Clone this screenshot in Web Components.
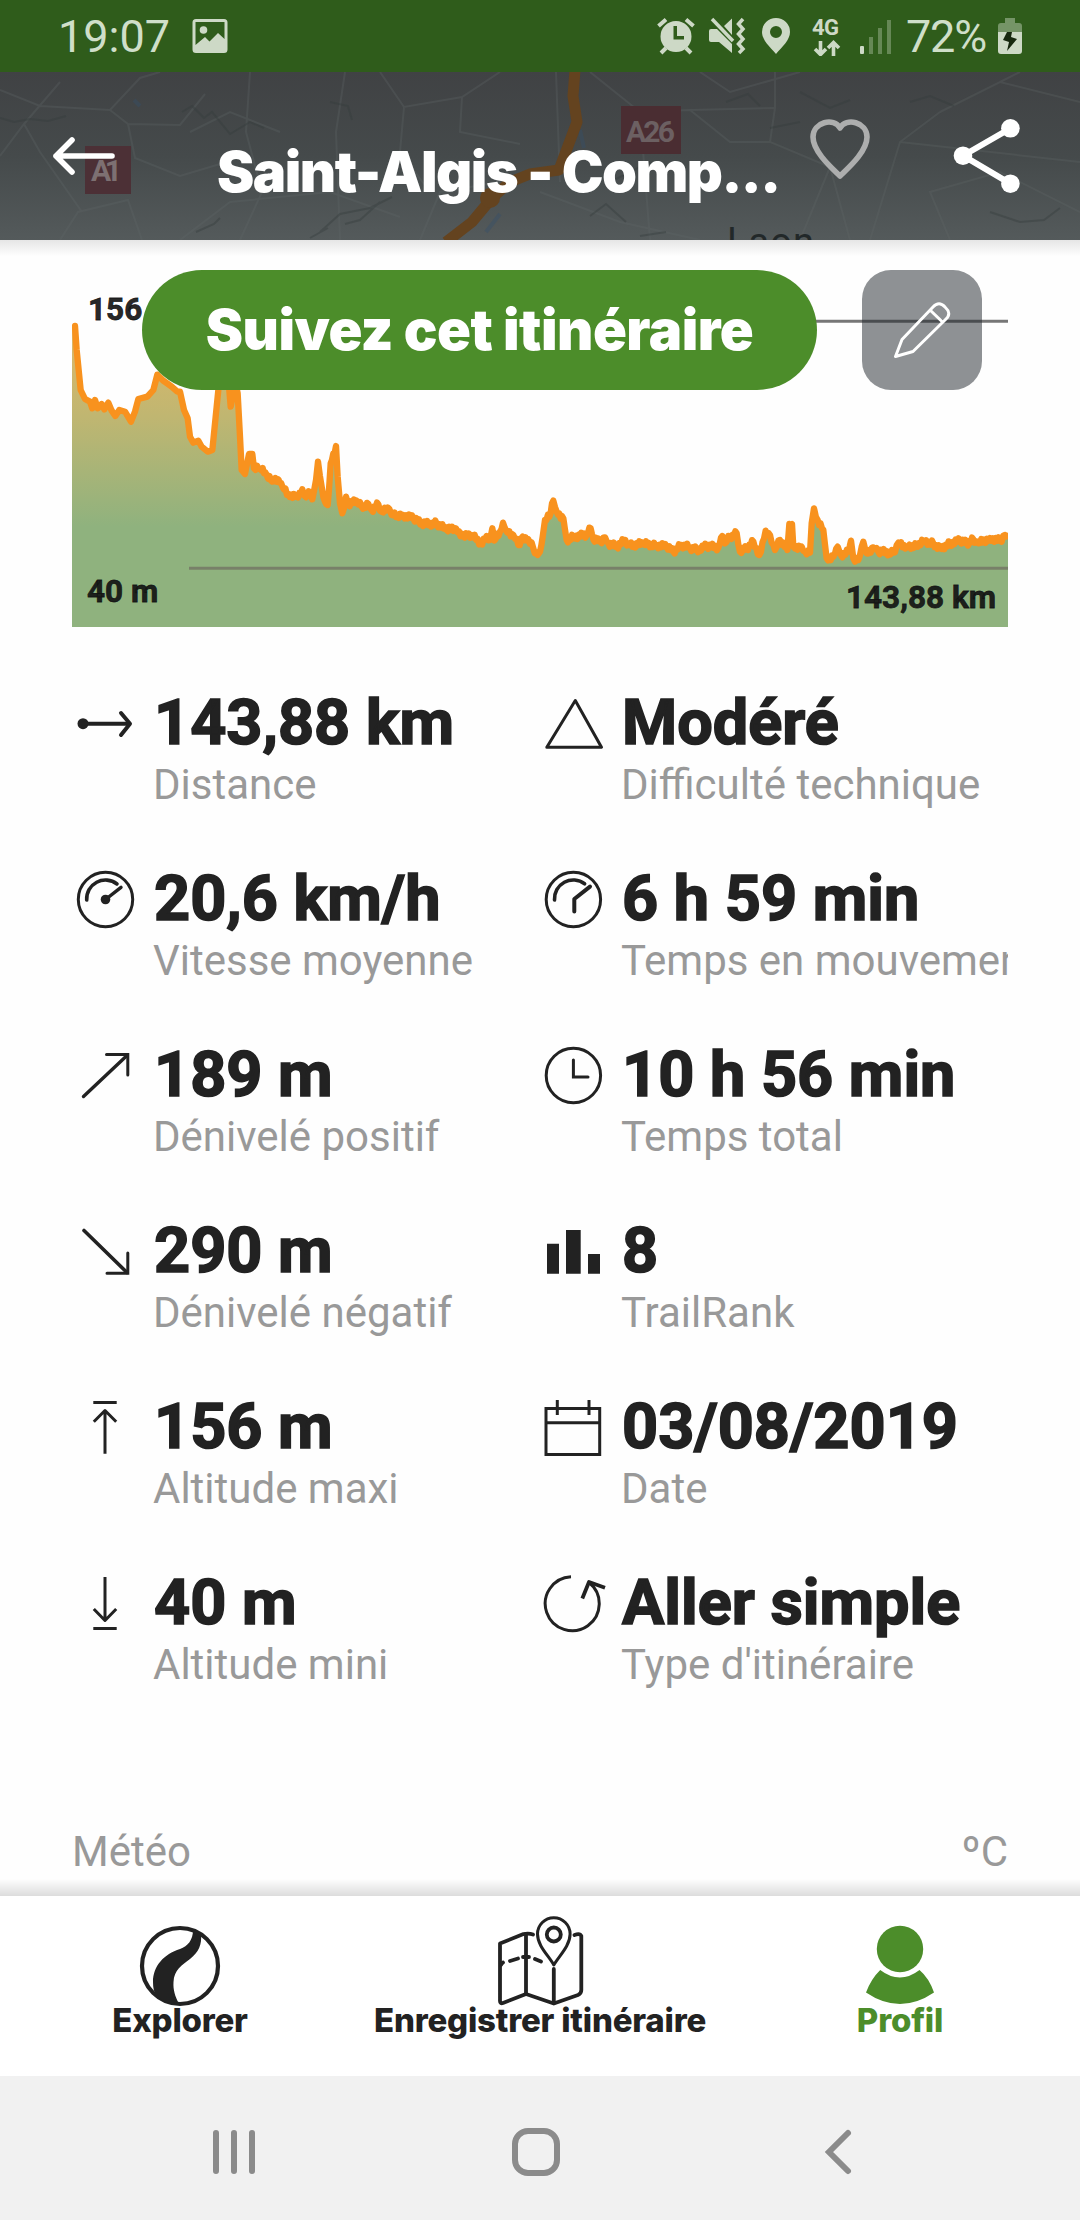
<!DOCTYPE html>
<html lang="fr">
<head>
<meta charset="utf-8">
<title>Saint-Algis</title>
<style>
    body {
        margin: 0;
        background: #fefefe;
        font-family: Roboto, "Liberation Sans", sans-serif;
        color: #222;
    }
</style>
</head>
<body>
<trail-screen>
    <status-bar slot="status" time="19:07" battery="72%"></status-bar>
    <trail-header slot="header">Saint-Algis - Comp...</trail-header>

    <elevation-chart max="156 m" min="40 m" distance="143,88 km">
        <follow-button>Suivez cet itinéraire</follow-button>
        <edit-button></edit-button>
    </elevation-chart>

    <stats-grid>
        <trail-stat icon="distance" label="Distance">143,88 km</trail-stat>
        <trail-stat icon="triangle" label="Difficulté technique">Modéré</trail-stat>
        <trail-stat icon="speed" label="Vitesse moyenne">20,6 km/h</trail-stat>
        <trail-stat icon="moving" label="Temps en mouvement">6 h 59 min</trail-stat>
        <trail-stat icon="up" label="Dénivelé positif">189 m</trail-stat>
        <trail-stat icon="clock" label="Temps total">10 h 56 min</trail-stat>
        <trail-stat icon="down" label="Dénivelé négatif">290 m</trail-stat>
        <trail-stat icon="rank" label="TrailRank">8</trail-stat>
        <trail-stat icon="max" label="Altitude maxi">156 m</trail-stat>
        <trail-stat icon="calendar" label="Date">03/08/2019</trail-stat>
        <trail-stat icon="min" label="Altitude mini">40 m</trail-stat>
        <trail-stat icon="loop" label="Type d'itinéraire">Aller simple</trail-stat>
    </stats-grid>

    <weather-row unit="ºC">Météo</weather-row>

    <tab-bar slot="tabs">
        <tab-item icon="explore">Explorer</tab-item>
        <tab-item icon="map">Enregistrer itinéraire</tab-item>
        <tab-item icon="profile" active>Profil</tab-item>
    </tab-bar>
    <system-nav slot="nav"></system-nav>
</trail-screen>

<script>
const statIcons = {
    distance: `<circle cx="11" cy="29.7" r="5.5" fill="#222" stroke="none"/><path d="M11 29.7H57" style="stroke-width:4"/><path d="M49 19L58 29.7L49 41" style="stroke-width:4"/>`,
    triangle: `<path d="M35.3 6.5L61.5 53.3H6.8Z"/>`,
    speed: `<circle cx="33.5" cy="29.5" r="27.2"/><path d="M14.7 30A18.8 18.8 0 0 1 45 14" style="stroke-width:3.6"/><circle cx="33.5" cy="29.5" r="4.8" fill="#222" stroke="none"/><path d="M33.5 29.5L49 17.3" style="stroke-width:3.4"/>`,
    moving: `<circle cx="33.4" cy="29.5" r="27.2"/><path d="M14.5 30A18.8 18.8 0 0 1 44.6 13.8" style="stroke-width:3.6"/><path d="M34.3 41.5V29L50 16.6" style="stroke-width:4"/>`,
    up: `<path d="M11.5 50.5L55 9.5" style="stroke-width:3.4"/><path d="M34.5 8.6H55.8V29" stroke-linejoin="miter"/>`,
    clock: `<circle cx="33.4" cy="29.5" r="27.2"/><path d="M33.4 14V31H48" stroke-linejoin="miter"/>`,
    down: `<path d="M12 8.5L55 50.5" style="stroke-width:3.6"/><path d="M35 51.3H55.8V31" stroke-linejoin="miter"/>`,
    rank: `<path d="M7 21.7H19V51.8H7ZM26 8H40.7V51.8H26ZM48 32H60V51.8H48Z" fill="#222" stroke="none"/>`,
    max: `<path d="M21.3 4.5H44.7M33 13V55.7M21.8 23.8L33 12.5L44.2 23.8" style="stroke-linecap:butt"/>`,
    calendar: `<path d="M6 10.4H59.7V56.500H6ZM6 24.7H59.7M17.3 2V17M49 2V17" style="stroke-linecap:butt;stroke-linejoin:miter"/>`,
    min: `<path d="M21.3 54.5H44.7M33 3V46.5M21.8 35L33 46.5L44.2 35" style="stroke-linecap:butt"/>`,
    loop: `<path d="M31 2.7A27 27 0 1 0 49 8.5" style="stroke-linecap:butt"/><path d="M42.3 24.5L49 8L65 13.7" style="stroke-width:3.8;stroke-linecap:butt"/>`
};

const tabIcons = {
    explore: `<circle cx="45" cy="50" r="38" fill="none" stroke="currentColor" stroke-width="4.2"/>
        <path fill="currentColor" d="M58 14C58 24 53 30 45 33C29 38 18 50 18 66C18 72 19 76 21 79C27 86 36 88 44 88C40 80 38 74 38.5 66C39 54 47 49 55 43C64 36 67 28 66 18Z"/>`,
    map: `<g fill="none" stroke="currentColor" stroke-width="3.8" stroke-linejoin="round" stroke-linecap="round">
        <path d="M38 18.5Q34 17 28.5 18L5 27.5V85Q5 88 8 87L31 78L58.8 87.5L83 79Q86.3 77.5 86.3 74V20Q85 17 79.5 19"/>
        <path d="M31 18V78M58.8 53V87"/>
        <path d="M6 49Q7 47 8 46.5M15 45L23 42.5M28 41H34M40 43L46 45.5"/>
        <path d="M58.8 49C54 40 42.5 30 42.5 18A16.3 16.3 0 0 1 75.1 18C75.1 30 64 40 58.8 49Z" stroke-width="3"/>
        <circle cx="58.8" cy="18.5" r="7"/></g>`,
    profile: `<circle cx="45" cy="33" r="23.2" fill="currentColor"/>
        <path fill="currentColor" d="M25.2 54Q45 69 64.5 54Q74 62 79 76.5Q62 88 45 88Q28 88 11 76.5Q16 63 25.2 54Z"/>`
};

function define(name, html, setup){
    const template = document.createElement('template');
    template.innerHTML = html;
    customElements.define(name, class extends HTMLElement{
        constructor(){
            super();
            this.attachShadow({mode: 'open'});
            this.shadowRoot.appendChild( template.content.cloneNode(true) );
        }
        connectedCallback(){
            if (setup) setup(this, this.shadowRoot);
        }
    });
}

define('trail-screen', `
    <style>
        :host {
            display: flex;
            flex-direction: column;
            width: 1080px;
            height: 2220px;
            overflow: hidden;
        }
        main {
            flex: 1;
            min-height: 0;
            overflow: hidden;
            padding: 30px 72px 0;
            box-sizing: border-box;
            background:
                linear-gradient(#e6e6e6, rgba(254, 254, 254, 0)) top / 100% 16px no-repeat,
                linear-gradient(rgba(254, 254, 254, 0), #dcdcdc) bottom / 100% 17px no-repeat,
                #fefefe;
        }
    </style>
    <slot name="status"></slot>
    <slot name="header"></slot>
    <main><slot></slot></main>
    <slot name="tabs"></slot>
    <slot name="nav"></slot>
`);

define('status-bar', `
    <style>
        :host {
            display: flex;
            align-items: center;
            height: 72px;
            flex: none;
            padding: 0 58px 0 58px;
            box-sizing: border-box;
            background: #2f5c1b;
            color: #cfdfc9;
            font-size: 45px;
        }
        svg { display: block; fill: #cdd9c6; }
        .photo { margin-left: 22px; }
        .icons { margin-left: auto; display: flex; align-items: center; }
        .level { width: 107px; padding-left: 15px; box-sizing: border-box; letter-spacing: -1.2px; }
        span { line-height: 72px; padding-top: 2px; }
    </style>
    <span class="time"></span>
    <svg class="photo" width="36" height="36" viewBox="0 0 36 36"><path fill-rule="evenodd" d="M4 1H32Q35.5 1 35.5 4.5V31.5Q35.5 35 32 35H4Q.5 35 .5 31.5V4.5Q.5 1 4 1ZM3.5 4V27L13 19L17.5 23.5L26 15L32.5 21V4Z"/><circle cx="11.5" cy="12" r="3.8"/></svg>
    <div class="icons">
        <svg width="38" height="38" viewBox="0 0 38 38"><path fill-rule="evenodd" d="M19 4A15.5 15.5 0 1 0 19 35A15.5 15.5 0 1 0 19 4ZM16.5 9H20V19H27V22.5H16.5Z"/><path d="M1.5 9L9 2.5M36.5 9L29 2.5M4 36L9 31M34 36L29 31" stroke="#cdd9c6" stroke-width="4"/></svg>
        <svg style="margin-left:14px" width="38" height="38" viewBox="0 0 38 38"><path d="M0 14Q0 12 2 12H8L23 27V36L10 25H2Q0 25 0 23ZM15 9L23 1.5V18Z"/><path d="M3 2L24 24" stroke="#cdd9c6" stroke-width="3.5"/><path d="M34 2L29.5 7L34 12L29.5 17L34 22L29.5 27L34 32L30 36" fill="none" stroke="#cdd9c6" stroke-width="3.5"/></svg>
        <svg style="margin-left:15px" width="28" height="38" viewBox="0 0 28 38"><path fill-rule="evenodd" d="M14 1A14 14 0 0 0 0 15C0 23 8 30 14 37C20 30 28 23 28 15A14 14 0 0 0 14 1ZM14 9A6 6 0 1 1 14 21A6 6 0 1 1 14 9Z"/></svg>
        <svg style="margin-left:22px" width="30" height="40" viewBox="0 0 30 40"><text x="0" y="19" font-family="Roboto" font-weight="700" font-size="22" textLength="27">4G</text><path d="M8.5 25V38M3 33L8.5 38.5L14 33M21.5 40V27M16 32L21.5 26.5L27 32" fill="none" stroke="#cdd9c6" stroke-width="3.6"/></svg>
        <svg style="margin-left:18px" width="31" height="38" viewBox="0 0 31 38"><rect y="29" width="4" height="8" rx="1"/><path d="M9 20H13V37H9ZM18 11H22V37H18ZM27 3H31V37H27Z" opacity=".35"/></svg>
        <span class="level"></span>
        <svg width="24" height="38" viewBox="0 0 24 38"><path d="M7 1H17V6H21Q24 6 24 9V15H0V9Q0 6 3 6H7Z" opacity=".45"/><path d="M0 15H24V34Q24 37 21 37H3Q0 37 0 34Z"/><path d="M9 15H14L13 20L19 22L9 34L11 25L5 23Z" fill="#17280f"/></svg>
    </div>
`, (host, root) => {
    root.querySelector('.time').textContent = host.getAttribute('time');
    root.querySelector('.level').textContent = host.getAttribute('battery');
});

define('trail-header', `
    <style>
        :host {
            position: relative;
            display: flex;
            align-items: center;
            height: 168px;
            flex: none;
            overflow: hidden;
            color: #fff;
            background: linear-gradient(#404244, #454a4b 50%, #545a5b);
        }
        .map { position: absolute; inset: 0; }
        .back { position: relative; margin-left: 50px; }
        h1 {
            position: relative;
            margin: 32px 0 0 100px;
            width: 575px;
            white-space: nowrap;
            font: 900 56px/68px Inter, sans-serif;
            letter-spacing: -1.5px;
        }
        .heart { position: relative; margin: -14px 0 0 15px; }
        .share { position: relative; margin: 0 0 0 80px; }
    </style>
    <svg class="map" width="1080" height="168" viewBox="0 0 1080 168">
        <g fill="none" stroke="#606768" stroke-width="2" opacity=".3">
            <path d="M0 18L40 34L110 38L140 6L160 0M110 38L128 52L180 53L205 22M128 52L135 86L180 104L220 92M0 84L24 52L60 10M60 168L78 140L128 128L142 168M24 52L40 80L82 140M250 0L246 60L262 120L240 168M345 0L336 60L340 168M380 0L404 35L462 25L500 0M404 35L400 80L430 120M462 25L460 60L520 72"/>
            <path d="M556 0L560 110M590 0L640 40L690 38L775 36L770 70L830 95L850 168M775 36V0M640 40L650 168M690 38L730 70L770 70M540 120L620 150L700 168M830 95L800 168M940 40L900 70L870 168M940 40L1000 10L1080 30M1000 10L1020 0M900 70L1080 90M950 168L930 120L1000 100L1080 140M700 0L730 20L800 0"/>
            <path d="M180 168L230 130L330 120L400 145M280 60L230 40L190 60M420 168L440 120L500 110"/>
        </g>
        <g fill="none" stroke="#343b3c" stroke-width="2" opacity=".4">
            <path d="M0 46L14 50L30 47L48 49L66 44M182 40L192 34L204 46L212 40L230 62L250 50L264 56M330 30L348 34L352 48M196 160L214 152L220 146M320 160L340 142L370 136L392 125M345 152L360 148L380 130M310 166L328 156"/>
            <path d="M726 30L748 22L760 34M770 56L800 50M800 20L830 36L850 28M990 140L1020 150L1044 148L1060 136M590 144L606 132L626 150M610 110L650 90M910 30L930 24L954 34M640 164L666 160"/>
        </g>
        <path d="M134 28L140 34M580 58L584 76M486 160L500 142" stroke="#35506b" stroke-width="4" opacity=".4"/>
        <path d="M575 -2L573 24L577 50L559 98L530 102L510 110L492 126L472 150L446 170" fill="none" stroke="#64431f" stroke-width="11" stroke-linejoin="round"/>
        <circle cx="490" cy="126" r="10" fill="#64431f"/>
        <g font-family="Roboto" font-weight="700" font-size="30">
            <rect x="85" y="74" width="46" height="48" fill="#4c3036"/><text x="91" y="109" fill="#7d7072" textLength="31">A1</text>
            <rect x="621" y="34" width="60" height="48" fill="#4a2d32"/><text x="626" y="70" fill="#6c6062" textLength="49">A26</text>
        </g>
        <text x="727" y="183" font-family="Roboto" font-size="38" fill="#222829" textLength="87">Laon</text>
    </svg>
    <svg class="back" width="67" height="40" viewBox="0 0 67 40"><path d="M62 20H6M22 4L6 20L22 36" fill="none" stroke="#fff" stroke-width="5.6" stroke-linecap="round" stroke-linejoin="round"/></svg>
    <h1><slot></slot></h1>
    <svg class="heart" width="66" height="66" viewBox="0 0 66 66"><path d="M33 60C26 53 6 36 6 21C6 6 27 1 33 12C39 1 60 6 60 21C60 36 40 53 33 60Z" fill="none" stroke="#adaeae" stroke-width="5.6" stroke-linejoin="round"/></svg>
    <svg class="share" width="70" height="80" viewBox="0 0 70 80"><path d="M57.4 12.3L10 39.7L57.4 67.7" fill="none" stroke="#fff" stroke-width="6"/><circle cx="57.4" cy="12.3" r="9.3" fill="#fff"/><circle cx="10" cy="39.7" r="9.3" fill="#fff"/><circle cx="57.4" cy="67.7" r="9.3" fill="#fff"/></svg>
`);

define('elevation-chart', `
    <style>
        :host {
            display: block;
            position: relative;
            height: 357px;
            font-size: 31.5px;
            font-weight: 700;
            line-height: 38px;
            -webkit-text-stroke: .8px;
        }
        svg { display: block; }
        span { position: absolute; color: rgba(18, 18, 18, .92); }
        .max { left: 16px; top: 21px; }
        .min { left: 15px; top: 303px; }
        .distance { right: 12px; top: 309px; }
        .actions {
            position: absolute;
            top: 0;
            left: 70px;
            display: flex;
            gap: 45px;
        }
    </style>
    <svg width="936" height="357" viewBox="36 60 2808 1071">
        <defs>
            <linearGradient id="slope" gradientUnits="userSpaceOnUse" x1="0" y1="228" x2="0" y2="830">
                <stop offset="0" stop-color="#e0b868"/>
                <stop offset=".45" stop-color="#c0b671"/>
                <stop offset="1" stop-color="#8fb27e"/>
            </linearGradient>
        </defs>
        <path class="area" fill="url(#slope)"/>
        <path class="line" fill="none" stroke="#f8921e" stroke-width="19" stroke-linejoin="round" stroke-linecap="round"/>
        <path d="M387 214H2844" stroke="#777" stroke-width="9"/>
        <path d="M387 955H2844" stroke="#788069" stroke-width="9"/>
    </svg>
    <span class="max"></span>
    <span class="min"></span>
    <span class="distance"></span>
    <div class="actions"><slot></slot></div>
`, (host, root) => {
    for (const key of ['max', 'min', 'distance']){
        root.querySelector('.' + key).textContent = host.getAttribute(key);
    }

    // Each half of the ride, x counted from the start of that half
    const firstHalf = '45,228 50,300 56,360 62,420 75,447 90,455 97,475 105,450 113,475 125,462 133,478 145,458 155,482 166,498 178,480 195,485 213,515 225,485 235,447 262,440 280,420 292,374 310,392 335,410 352,425 360,425 372,480 383,505 390,560 400,578 415,572 425,590 443,605 457,600 463,540 475,420 478,385 505,385 512,470 527,400 533,430 540,560 545,660 555,672 567,612 577,612 582,655 600,655 620,675 637,695 655,688 668,712 685,732 710,740 727,718 738,742 750,728 757,748 768,690 774,635 785,710 795,755 803,765 812,640 828,588 833,680 840,760 847,790 858,740 865,765 890,752 905,770 925,762 935,780 955,763 965,785 988,777 995,795 1030,795 1060,805 1085,822 1130,820 1160,840 1188,835 1210,860 1235,855 1262,880 1280,858 1290,870 1297,835 1303,872 1320,845 1329,818 1340,845 1360,855 1375,885 1388,860 1405,868 1420,895 1433,915';
    const secondHalf = '0,905 8,860 15,810 28,800 40,752 50,785 70,805 80,870 100,860 140,855 152,835 160,868 180,875 195,862 205,880 230,890 256,870 265,885 310,882 350,885 380,890 400,905 425,885 450,893 470,900 500,888 535,893 547,858 555,880 570,860 590,850 600,905 620,895 640,875 658,915 677,842 690,855 705,900 720,870 742,900 748,822 756,822 760,890 785,890 795,905 810,908 815,820 822,775 833,810 850,840 860,925 880,920 893,890 903,915 925,905 933,872 940,925 955,930 970,875 980,910 1000,892 1015,905 1060,908 1075,878 1100,890 1130,885 1150,872 1180,880 1200,895 1230,880 1260,872 1280,880 1300,868 1315,880 1350,864 1380,872 1395,855 1404,857';
    const parse = (text, start) => text.split(' ').map(pair => {
        const [x, y] = pair.split(',').map(Number);
        return [x + start, y];
    });
    const points = parse(firstHalf, 0).concat(parse(secondHalf, 1440));

    // small bumps between the samples
    const rough = [];
    points.forEach(([x, y], i) => {
        rough.push([x, y]);
        const next = points[i + 1];
        if (!next || x < 580) return;
        const steps = Math.floor((next[0] - x) / 4);
        for (let s = 1; s < steps; s++){
            const t = s / steps;
            const bump = 5 + 4 * Math.sin(x + s * 2.3);
            rough.push([x + (next[0] - x) * t, y + (next[1] - y) * t + (s % 2 ? bump : -bump)]);
        }
    });
    const line = 'M' + rough.map(p => p.join(' ')).join('L');
    root.querySelector('.line').setAttribute('d', line);
    root.querySelector('.area').setAttribute('d', line + 'V1131H36V228Z');
});

define('follow-button', `
    <style>
        :host {
            display: flex;
            align-items: center;
            justify-content: center;
            width: 675px;
            height: 120px;
            border-radius: 60px;
            background: #4c8d2a;
            color: #fff;
            font: 900 56px/1 Inter, sans-serif;
            letter-spacing: -.5px;
            white-space: nowrap;
            -webkit-text-stroke: 0;
        }
    </style>
    <slot></slot>
`);

define('edit-button', `
    <style>
        :host {
            display: block;
            width: 120px;
            height: 120px;
            border-radius: 29px;
            background: rgba(30, 36, 41, .5);
        }
        svg { display: block; }
    </style>
    <svg width="120" height="120" viewBox="0 0 120 120" fill="none" stroke="#fff" stroke-width="3" stroke-linejoin="round">
        <path d="M33.5 86.5L40 69.5L71 37Q77 30.5 83 37Q90 43.5 84 49L51 81.5Z"/>
        <path d="M68 40L80.5 52"/>
    </svg>
`);

define('stats-grid', `
    <style>
        :host {
            display: grid;
            grid-template-columns: 468px 468px;
            grid-auto-rows: 126px;
            row-gap: 50px;
            margin-top: 57px;
        }
    </style>
    <slot></slot>
`);

define('trail-stat', `
    <style>
        :host {
            display: flex;
            overflow: hidden;
        }
        svg {
            flex: none;
            margin: 10px 15px 0 0;
            fill: none;
            stroke: #222;
            stroke-width: 3px;
            stroke-linecap: round;
            stroke-linejoin: round;
        }
        div { white-space: nowrap; }
        .value {
            font-size: 63px;
            font-weight: 700;
            line-height: 78px;
            -webkit-text-stroke: 1.6px;
            padding-left: 1px;
        }
        .label {
            font-size: 42px;
            line-height: 46px;
            color: #999;
        }
    </style>
    <svg width="66" height="60" viewBox="0 0 66 60"></svg>
    <div>
        <div class="value"><slot></slot></div>
        <div class="label"></div>
    </div>
`, (host, root) => {
    root.querySelector('svg').innerHTML = statIcons[host.getAttribute('icon')];
    root.querySelector('.label').textContent = host.getAttribute('label');
});

define('weather-row', `
    <style>
        :host {
            display: flex;
            justify-content: space-between;
            margin-top: 137px;
            font-size: 42px;
            line-height: 50px;
            color: #999;
        }
    </style>
    <slot></slot>
    <span></span>
`, (host, root) => {
    root.querySelector('span').textContent = host.getAttribute('unit');
});

define('tab-bar', `
    <style>
        :host {
            display: grid;
            grid-template-columns: repeat(3, 1fr);
            height: 180px;
            flex: none;
            background: #fff;
        }
    </style>
    <slot></slot>
`);

define('tab-item', `
    <style>
        :host {
            display: flex;
            flex-direction: column;
            align-items: center;
            padding-top: 20px;
            color: #222;
            font: 800 33px/40px Inter, sans-serif;
            letter-spacing: -.2px;
            white-space: nowrap;
        }
        :host([active]) { color: #4c8d2a; }
        svg { display: block; overflow: visible; }
        span { margin-top: -6px; }
    </style>
    <svg width="90" height="90" viewBox="0 0 90 90"></svg>
    <span><slot></slot></span>
`, (host, root) => {
    root.querySelector('svg').innerHTML = tabIcons[host.getAttribute('icon')];
});

define('system-nav', `
    <style>
        :host {
            display: flex;
            align-items: center;
            justify-content: space-between;
            height: 144px;
            flex: none;
            padding: 8px 226px 0 210px;
            box-sizing: border-box;
            background: #f1f1f1;
        }
        svg { fill: none; stroke: #8b8b8b; stroke-width: 6px; stroke-linecap: round; }
        .home { margin-right: 8px; }
    </style>
    <svg width="48" height="50" viewBox="0 0 48 50"><path d="M6 6V44M24 6V44M42 6V44"/></svg>
    <svg class="home" width="50" height="50" viewBox="0 0 50 50"><rect x="4" y="4" width="42" height="42" rx="13"/></svg>
    <svg width="32" height="50" viewBox="0 0 32 50"><path d="M26 6L7 25L26 44"/></svg>
`);
</script>
</body>
</html>
